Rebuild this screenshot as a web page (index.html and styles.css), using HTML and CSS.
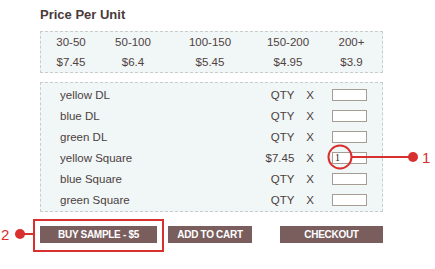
FILE: index.html
```html
<!DOCTYPE html>
<html lang="en">
<head>
    <meta charset="UTF-8">
    <meta name="viewport" content="width=device-width, initial-scale=1.0">
    <title>Price Per Unit</title>
    <link rel="stylesheet" href="styles.css">
</head>
<body>

<div class="container">
    <h1>Price Per Unit</h1>

    <div class="price-box">
        <div class="price-grid">
            <span>30-50</span>
            <span>50-100</span>
            <span>100-150</span>
            <span>150-200</span>
            <span>200+</span>
            <span>$7.45</span>
            <span>$6.4</span>
            <span>$5.45</span>
            <span>$4.95</span>
            <span>$3.9</span>
        </div>
    </div>

    <div class="product-box">
        <div class="row">
            <span class="name">yellow DL</span>
            <span class="qty">QTY</span>
            <span class="x">X</span>
            <input type="text" class="qty-input">
        </div>
        <div class="row">
            <span class="name">blue DL</span>
            <span class="qty">QTY</span>
            <span class="x">X</span>
            <input type="text" class="qty-input">
        </div>
        <div class="row">
            <span class="name">green DL</span>
            <span class="qty">QTY</span>
            <span class="x">X</span>
            <input type="text" class="qty-input">
        </div>
        <div class="row">
            <span class="name">yellow Square</span>
            <span class="qty">$7.45</span>
            <span class="x">X</span>
            <input type="text" class="qty-input" value="1">
        </div>
        <div class="row">
            <span class="name">blue Square</span>
            <span class="qty">QTY</span>
            <span class="x">X</span>
            <input type="text" class="qty-input">
        </div>
        <div class="row">
            <span class="name">green Square</span>
            <span class="qty">QTY</span>
            <span class="x">X</span>
            <input type="text" class="qty-input">
        </div>
    </div>

    <div class="buttons">
        <button class="btn btn-sample">BUY SAMPLE - $5</button>
        <button class="btn btn-cart">ADD TO CART</button>
        <button class="btn btn-checkout">CHECKOUT</button>
    </div>
</div>

<!-- marcações em vermelho por cima da tela -->
<svg class="notes" width="435" height="269" viewBox="0 0 435 269">
    <circle cx="340" cy="157" r="11.5" fill="none" stroke="#d8302f" stroke-width="2"/>
    <line x1="352" y1="157" x2="412" y2="157" stroke="#d8302f" stroke-width="2"/>
    <circle cx="413" cy="157" r="5" fill="#d8302f"/>
    <text x="422" y="163" class="note-num">1</text>

    <rect x="34" y="220" width="129" height="31" fill="none" stroke="#d8302f" stroke-width="2"/>
    <line x1="20" y1="234" x2="33" y2="234" stroke="#d8302f" stroke-width="2"/>
    <circle cx="20" cy="234" r="5" fill="#d8302f"/>
    <text x="1" y="240" class="note-num">2</text>
</svg>

</body>
</html>
```

FILE: styles.css
```css
* {
    margin: 0;
    padding: 0;
    box-sizing: border-box;
}

body {
    font-family: "Liberation Sans", Arial, sans-serif;
    background-color: #fff;
    color: #4b3f3f;
    width: 435px;
    height: 269px;
    position: relative;
    overflow: hidden;
}

.container {
    width: 383px;
    padding: 7px 0 0 40px;
}

h1 {
    font-size: 13px;
    line-height: 16px;
    font-weight: bold;
    color: #4a3a3a;
    margin-bottom: 8px;
}

.price-box, .product-box {
    background-color: #f1f6f6;
    border: 1px dashed #c9cccc;
}

.price-grid {
    display: grid;
    grid-template-columns: 60px 64px 90px 66px 61px;
    grid-auto-rows: 20px;
    align-items: center;
    text-align: center;
    font-size: 11.5px;
    color: #4e4242;
}

.product-box {
    margin-top: 9px;
    padding: 1px 0;
}

.row {
    display: flex;
    align-items: center;
    height: 21px;
    font-size: 11.5px;
    padding-left: 19px;
}

.row .qty {
    margin-left: auto;
}

.row .x {
    margin: 0 18px 0 12px;
}

.qty-input {
    width: 35px;
    height: 12px;
    margin-right: 15px;
    border: 1px solid #a59c93;
    background-color: #fff;
    font-family: "Liberation Serif", serif;
    font-size: 10px;
    padding: 0 2px;
    color: #222;
}

.buttons {
    display: flex;
    margin-top: 14px;
}

.btn {
    height: 17px;
    background-color: #7a5e5e;
    color: #fff;
    border: none;
    font-family: "Liberation Sans", Arial, sans-serif;
    font-size: 10px;
    font-weight: bold;
    letter-spacing: -0.3px;
}

.btn-sample {
    width: 117px;
}

.btn-cart {
    width: 84px;
    margin-left: 11px;
}

.btn-checkout {
    width: 103px;
    margin-left: 28px;
}

.notes {
    position: absolute;
    left: 0;
    top: 0;
    pointer-events: none;
}

.note-num {
    font-family: "Liberation Sans", Arial, sans-serif;
    font-size: 15px;
    fill: #d8302f;
}
```
